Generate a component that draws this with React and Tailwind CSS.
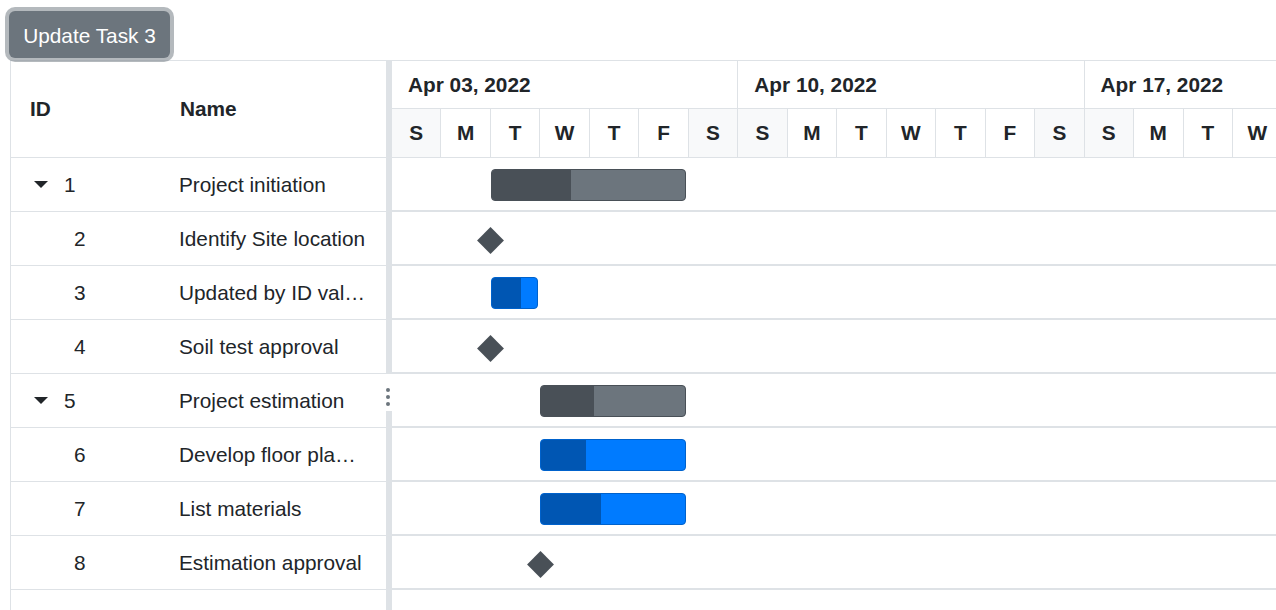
import React from 'react';

// Task rows: left/width of bars are in px on the timeline (day ≈ 49.47px)
const tasks = [
  { id: 1, name: 'Project initiation', parent: true, type: 'bar', color: 'gray', left: 99, width: 195, progress: 79 },
  { id: 2, name: 'Identify Site location', type: 'milestone', left: 89 },
  { id: 3, name: 'Updated by ID value', type: 'bar', color: 'blue', left: 99, width: 47, progress: 29 },
  { id: 4, name: 'Soil test approval', type: 'milestone', left: 89 },
  { id: 5, name: 'Project estimation', parent: true, type: 'bar', color: 'gray', left: 148, width: 146, progress: 53 },
  { id: 6, name: 'Develop floor plan for estimation', type: 'bar', color: 'blue', left: 148, width: 146, progress: 45 },
  { id: 7, name: 'List materials', type: 'bar', color: 'blue', left: 148, width: 146, progress: 60 },
  { id: 8, name: 'Estimation approval', type: 'milestone', left: 138.5 },
];

const weeks = ['Apr 03, 2022', 'Apr 10, 2022', 'Apr 17, 2022'];
const days = ['S', 'M', 'T', 'W', 'T', 'F', 'S'];

function TaskBar({ task }) {
  if (task.type === 'milestone') {
    return (
      <div
        className="absolute top-[19px] w-[19px] h-[19px] rotate-45 bg-[#495057]"
        style={{ left: task.left }}
      />
    );
  }
  const gray = task.color === 'gray';
  return (
    <div
      className={`absolute top-[11px] h-[32px] rounded-[4px] border overflow-hidden ${
        gray ? 'bg-[#6c757d] border-[#495057]' : 'bg-[#007bff] border-[#0062cc]'
      }`}
      style={{ left: task.left, width: task.width }}
    >
      <div
        className={`h-full ${gray ? 'bg-[#495057]' : 'bg-[#0056b3]'}`}
        style={{ width: task.progress }}
      />
    </div>
  );
}

export default function App() {
  return (
    <div className="h-[610px] overflow-hidden bg-white text-[#212529] font-['Liberation_Sans',Arial,sans-serif] text-[20.8px]">
      <div className="h-[60px] pl-[9px] pt-[11px]">
        <button className="relative z-10 h-[47px] w-[161px] rounded-[6px] bg-[#6c757d] pt-[2px] text-white shadow-[0_0_0_4px_rgba(130,138,145,0.6)]">
          Update Task 3
        </button>
      </div>

      <div className="ml-[10px] flex border-l border-t border-[#dee2e6]">
        {/* Grid */}
        <div className="w-[375px] shrink-0">
          <div className="flex h-[97px] items-center border-b border-[#dee2e6] font-bold">
            <div className="w-[149px] pl-[19px]">ID</div>
            <div className="pl-[20px]">Name</div>
          </div>
          {tasks.map((t) => (
            <div key={t.id} className="flex h-[54px] items-center border-b border-[#dee2e6]">
              <div className="flex w-[149px] items-center">
                {t.parent ? (
                  <>
                    <svg width="14" height="7" viewBox="0 0 14 7" className="ml-[23px] mr-[16px]">
                      <polygon points="0,0 14,0 7,7" fill="#212529" />
                    </svg>
                    <span>{t.id}</span>
                  </>
                ) : (
                  <span className="pl-[63px]">{t.id}</span>
                )}
              </div>
              <div className="w-[226px] truncate pl-[19px] pr-[19px]">{t.name}</div>
            </div>
          ))}
        </div>

        {/* Splitter */}
        <div className="relative w-[6px] shrink-0 self-stretch bg-[#dee2e6] min-h-[560px]">
          <div className="absolute left-0 top-[313px] flex h-[37px] w-[6px] flex-col gap-[3px] bg-white pt-[14px]">
            <span className="block h-[4px] w-[4px] rounded-full bg-[#6c757d]" />
            <span className="block h-[4px] w-[4px] rounded-full bg-[#6c757d]" />
            <span className="block h-[4px] w-[4px] rounded-full bg-[#6c757d]" />
          </div>
        </div>

        {/* Chart */}
        <div className="flex-1 overflow-hidden">
          <div className="grid w-max grid-cols-[repeat(21,49.47px)] font-bold">
            {weeks.map((w) => (
              <div key={w} className="col-span-7 flex h-[48px] items-center border-b border-r border-[#dee2e6] pl-[16px]">
                {w}
              </div>
            ))}
            {weeks.map((w) =>
              days.map((d, i) => (
                <div
                  key={w + i}
                  className={`flex h-[49px] items-center justify-center border-b border-r border-[#dee2e6] ${
                    i === 0 || i === 6 ? 'bg-[#f8f9fa]' : 'bg-white'
                  }`}
                >
                  {d}
                </div>
              ))
            )}
          </div>
          {tasks.map((t) => (
            <div key={t.id} className="relative h-[54px] border-b-2 border-[#dee2e6]">
              <TaskBar task={t} />
            </div>
          ))}
        </div>
      </div>
    </div>
  );
}
